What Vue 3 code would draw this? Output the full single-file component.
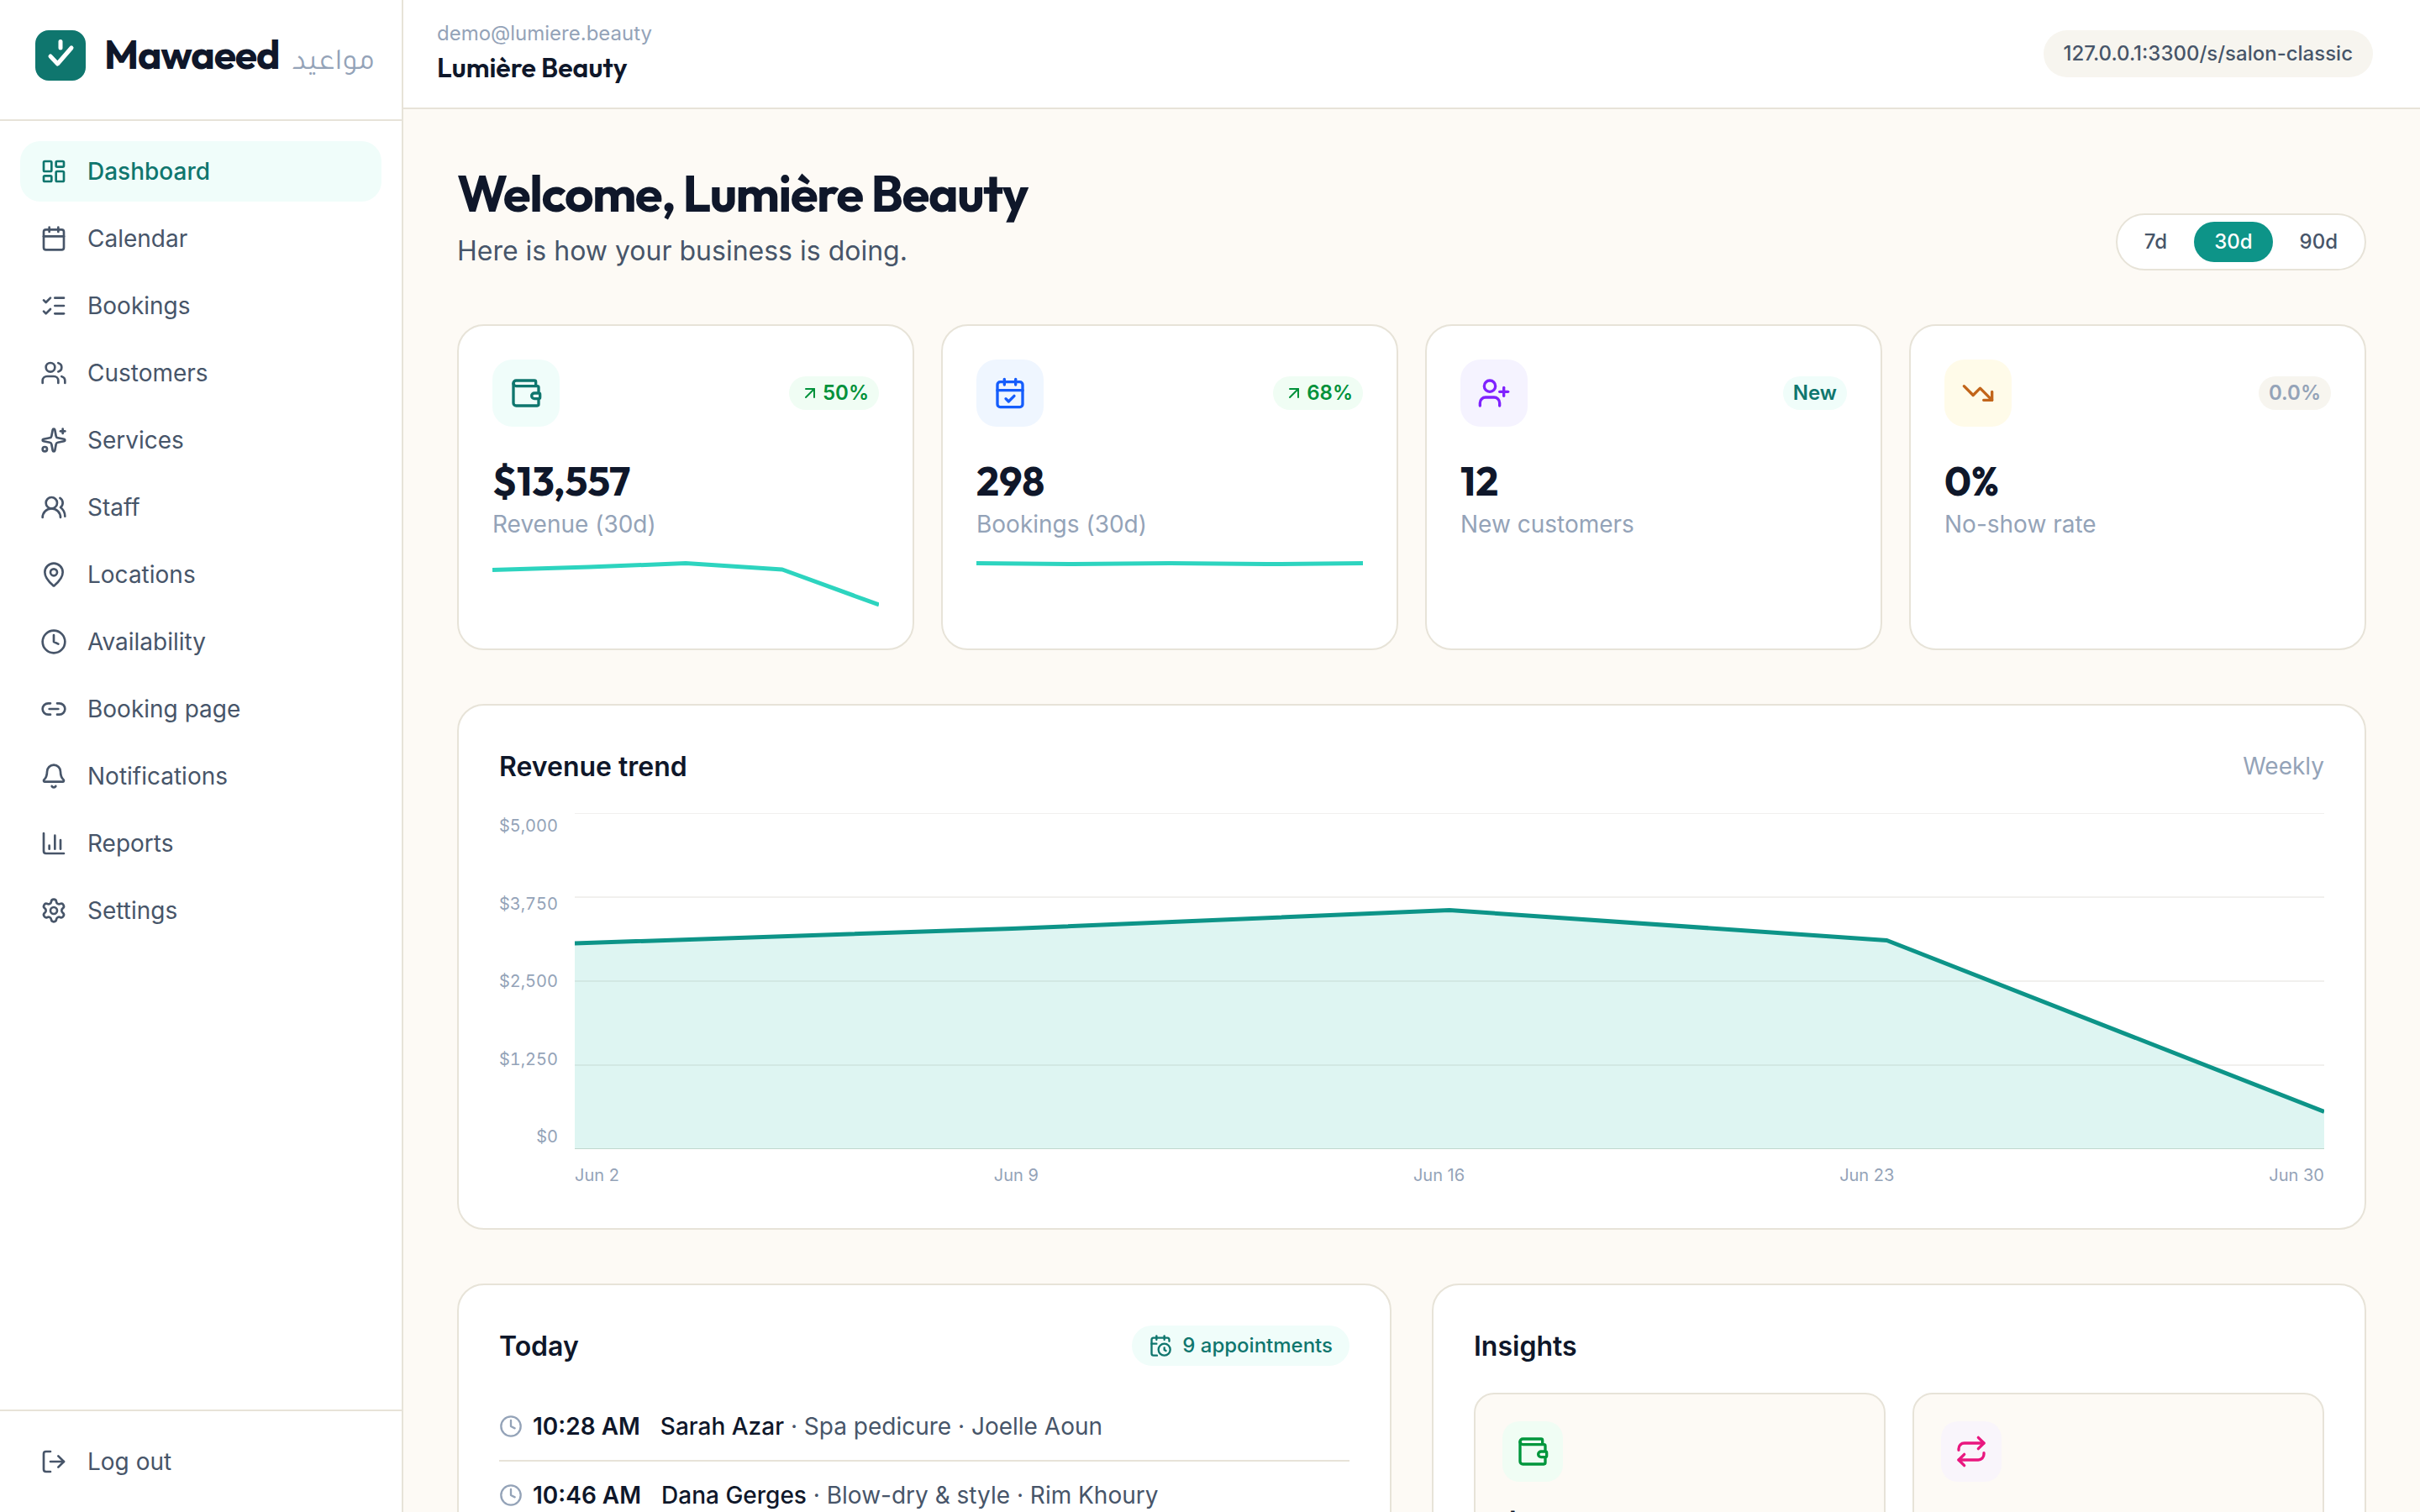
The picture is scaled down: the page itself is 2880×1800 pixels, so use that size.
<script setup>
const icons = {
  dashboard: '<rect width="7" height="9" x="3" y="3" rx="1"/><rect width="7" height="5" x="14" y="3" rx="1"/><rect width="7" height="9" x="14" y="12" rx="1"/><rect width="7" height="5" x="3" y="16" rx="1"/>',
  calendar: '<path d="M8 2v4"/><path d="M16 2v4"/><rect width="18" height="18" x="3" y="4" rx="2"/><path d="M3 10h18"/>',
  calendarCheck: '<path d="M8 2v4"/><path d="M16 2v4"/><rect width="18" height="18" x="3" y="4" rx="2"/><path d="M3 10h18"/><path d="m9 16 2 2 4-4"/>',
  calendarClock: '<path d="M16 14v2.2l1.6 1"/><path d="M16 2v4"/><path d="M21 7.5V6a2 2 0 0 0-2-2H5a2 2 0 0 0-2 2v14a2 2 0 0 0 2 2h3.5"/><path d="M3 10h5"/><path d="M8 2v4"/><circle cx="16" cy="16" r="6"/>',
  listChecks: '<path d="M13 5h8"/><path d="M13 12h8"/><path d="M13 19h8"/><path d="m3 17 2 2 4-4"/><path d="m3 7 2 2 4-4"/>',
  users: '<path d="M16 21v-2a4 4 0 0 0-4-4H6a4 4 0 0 0-4 4v2"/><path d="M16 3.128a4 4 0 0 1 0 7.744"/><path d="M22 21v-2a4 4 0 0 0-3-3.87"/><circle cx="9" cy="7" r="4"/>',
  sparkles: '<path d="M11.017 2.814a1 1 0 0 1 1.966 0l1.051 5.558a2 2 0 0 0 1.594 1.594l5.558 1.051a1 1 0 0 1 0 1.966l-5.558 1.051a2 2 0 0 0-1.594 1.594l-1.051 5.558a1 1 0 0 1-1.966 0l-1.051-5.558a2 2 0 0 0-1.594-1.594l-5.558-1.051a1 1 0 0 1 0-1.966l5.558-1.051a2 2 0 0 0 1.594-1.594z"/><path d="M20 2v4"/><path d="M22 4h-4"/><circle cx="4" cy="20" r="2"/>',
  usersRound: '<path d="M18 21a8 8 0 0 0-16 0"/><circle cx="10" cy="8" r="5"/><path d="M22 20c0-3.37-2-6.5-4-8a5 5 0 0 0-.45-8.3"/>',
  mapPin: '<path d="M20 10c0 4.993-5.539 10.193-7.399 11.799a1 1 0 0 1-1.202 0C9.539 20.193 4 14.993 4 10a8 8 0 0 1 16 0"/><circle cx="12" cy="10" r="3"/>',
  clock: '<circle cx="12" cy="12" r="10"/><path d="M12 6v6l4 2"/>',
  link: '<path d="M9 17H7A5 5 0 0 1 7 7h2"/><path d="M15 7h2a5 5 0 1 1 0 10h-2"/><path d="M8 12h8"/>',
  bell: '<path d="M10.268 21a2 2 0 0 0 3.464 0"/><path d="M3.262 15.326A1 1 0 0 0 4 17h16a1 1 0 0 0 .74-1.673C19.41 13.956 18 12.499 18 8A6 6 0 0 0 6 8c0 4.499-1.411 5.956-2.738 7.326"/>',
  chart: '<path d="M3 3v16a2 2 0 0 0 2 2h16"/><path d="M18 17V9"/><path d="M13 17V5"/><path d="M8 17v-3"/>',
  settings: '<path d="M9.671 4.136a2.34 2.34 0 0 1 4.659 0 2.34 2.34 0 0 0 3.319 1.915 2.34 2.34 0 0 1 2.33 4.033 2.34 2.34 0 0 0 0 3.831 2.34 2.34 0 0 1-2.33 4.033 2.34 2.34 0 0 0-3.319 1.915 2.34 2.34 0 0 1-4.659 0 2.34 2.34 0 0 0-3.32-1.915 2.34 2.34 0 0 1-2.33-4.033 2.34 2.34 0 0 0 0-3.831A2.34 2.34 0 0 1 6.35 6.051a2.34 2.34 0 0 0 3.319-1.915"/><circle cx="12" cy="12" r="3"/>',
  logout: '<path d="m16 17 5-5-5-5"/><path d="M21 12H9"/><path d="M9 21H5a2 2 0 0 1-2-2V5a2 2 0 0 1 2-2h4"/>',
  wallet: '<path d="M19 7V4a1 1 0 0 0-1-1H5a2 2 0 0 0 0 4h15a1 1 0 0 1 1 1v4h-3a2 2 0 0 0 0 4h3a1 1 0 0 0 1-1v-2a1 1 0 0 0-1-1"/><path d="M3 5v14a2 2 0 0 0 2 2h15a1 1 0 0 0 1-1v-4"/>',
  userPlus: '<path d="M16 21v-2a4 4 0 0 0-4-4H6a4 4 0 0 0-4 4v2"/><circle cx="9" cy="7" r="4"/><path d="M19 8v6"/><path d="M22 11h-6"/>',
  trendingDown: '<path d="M16 17h6v-6"/><path d="m22 17-8.5-8.5-5 5L2 7"/>',
  arrowUpRight: '<path d="M7 7h10v10"/><path d="M7 17 17 7"/>',
  repeat: '<path d="m17 2 4 4-4 4"/><path d="M3 11v-1a4 4 0 0 1 4-4h14"/><path d="m7 22-4-4 4-4"/><path d="M21 13v1a4 4 0 0 1-4 4H3"/>'
}

const nav = [
  { label: 'Dashboard', icon: 'dashboard', active: true },
  { label: 'Calendar', icon: 'calendar' },
  { label: 'Bookings', icon: 'listChecks' },
  { label: 'Customers', icon: 'users' },
  { label: 'Services', icon: 'sparkles' },
  { label: 'Staff', icon: 'usersRound' },
  { label: 'Locations', icon: 'mapPin' },
  { label: 'Availability', icon: 'clock' },
  { label: 'Booking page', icon: 'link' },
  { label: 'Notifications', icon: 'bell' },
  { label: 'Reports', icon: 'chart' },
  { label: 'Settings', icon: 'settings' }
]

const ranges = ['7d', '30d', '90d']

const stats = [
  { value: '$13,557', label: 'Revenue (30d)', icon: 'wallet', tone: 'teal', badge: '50%', badgeTone: 'up', line: '0,10.6 115,7 230,2.6 345,10 460,52' },
  { value: '298', label: 'Bookings (30d)', icon: 'calendarCheck', tone: 'blue', badge: '68%', badgeTone: 'up', line: '0,2.5 115,3.6 230,2.5 345,3.6 460,2.5' },
  { value: '12', label: 'New customers', icon: 'userPlus', tone: 'violet', badge: 'New', badgeTone: 'fresh' },
  { value: '0%', label: 'No-show rate', icon: 'trendingDown', tone: 'amber', badge: '0.0%', badgeTone: 'flat' }
]

const yLabels = ['$5,000', '$3,750', '$2,500', '$1,250', '$0']
const xLabels = ['Jun 2', 'Jun 9', 'Jun 16', 'Jun 23', 'Jun 30']
const gridLines = [0, 100, 200, 300, 400]
const trend = '0,155 520.5,137.5 1041,115.5 1561.5,151.5 2082,355.5'

const appointments = [
  { time: '10:28 AM', name: 'Sarah Azar', rest: 'Spa pedicure · Joelle Aoun' },
  { time: '10:46 AM', name: 'Dana Gerges', rest: 'Blow-dry & style · Rim Khoury' }
]
</script>

<template>
  <div class="app">
    <aside class="sidebar">
      <div class="brand">
        <svg class="logo" viewBox="0 0 60 60">
          <rect width="60" height="60" rx="16" fill="#0f766e" />
          <path d="M18 31l8.500 9L43 21" fill="none" stroke="#fff" stroke-width="5" stroke-linecap="round" stroke-linejoin="round" />
          <path d="M30 13.500v7.500" stroke="#fff" stroke-width="5" stroke-linecap="round" />
        </svg>
        <div class="brand-text">
          <span class="wordmark">Mawaeed</span>
          <span class="arabic" lang="ar">مواعيد</span>
        </div>
      </div>
      <nav class="nav">
        <a v-for="n in nav" :key="n.label" class="nav-item" :class="{ active: n.active }">
          <svg class="icon" viewBox="0 0 24 24" v-html="icons[n.icon]" />
          <span>{{ n.label }}</span>
        </a>
      </nav>
      <div class="logout">
        <a class="nav-item">
          <svg class="icon" viewBox="0 0 24 24" v-html="icons.logout" />
          <span>Log out</span>
        </a>
      </div>
    </aside>

    <div class="content">
      <header class="topbar">
        <div>
          <div class="email">demo@lumiere.beauty</div>
          <div class="business">Lumière Beauty</div>
        </div>
        <div class="url">127.0.0.1:3300/s/salon-classic</div>
      </header>

      <main class="main">
        <div class="intro">
          <div>
            <h1>Welcome, Lumière Beauty</h1>
            <p>Here is how your business is doing.</p>
          </div>
          <div class="ranges">
            <button v-for="r in ranges" :key="r" :class="{ on: r === '30d' }">{{ r }}</button>
          </div>
        </div>

        <section class="stats">
          <article v-for="s in stats" :key="s.label" class="card stat">
            <div class="stat-top">
              <div class="tile" :class="s.tone">
                <svg class="icon" viewBox="0 0 24 24" v-html="icons[s.icon]" />
              </div>
              <span class="badge" :class="s.badgeTone">
                <svg v-if="s.badgeTone === 'up'" class="icon" viewBox="0 0 24 24" v-html="icons.arrowUpRight" />
                <span>{{ s.badge }}</span>
              </span>
            </div>
            <div class="value">{{ s.value }}</div>
            <div class="label">{{ s.label }}</div>
            <svg v-if="s.line" class="spark" viewBox="0 0 460 64">
              <polyline :points="s.line" />
            </svg>
          </article>
        </section>

        <section class="card panel">
          <div class="panel-head">
            <h2>Revenue trend</h2>
            <span class="muted">Weekly</span>
          </div>
          <div class="chart">
            <div class="y-axis">
              <span v-for="y in yLabels" :key="y">{{ y }}</span>
            </div>
            <div class="plot">
              <svg viewBox="0 0 2082 400">
                <line v-for="g in gridLines" :key="g" x1="0" x2="2082" :y1="g" :y2="g" class="grid" :class="{ base: g === 400 }" />
                <polygon :points="`0,400 ${trend} 2082,400`" class="area" />
                <polyline :points="trend" class="trend" />
              </svg>
              <div class="x-axis">
                <span v-for="x in xLabels" :key="x">{{ x }}</span>
              </div>
            </div>
          </div>
        </section>

        <div class="columns">
          <section class="card panel">
            <div class="panel-head">
              <h2>Today</h2>
              <span class="count">
                <svg class="icon" viewBox="0 0 24 24" v-html="icons.calendarClock" />
                <span>9 appointments</span>
              </span>
            </div>
            <ul class="list">
              <li v-for="a in appointments" :key="a.time">
                <svg class="icon" viewBox="0 0 24 24" v-html="icons.clock" />
                <span class="time">{{ a.time }}</span>
                <span class="who"><b>{{ a.name }}</b> · {{ a.rest }}</span>
              </li>
            </ul>
          </section>

          <section class="card panel">
            <div class="panel-head">
              <h2>Insights</h2>
            </div>
            <div class="insights">
              <div class="insight">
                <div class="tile green">
                  <svg class="icon" viewBox="0 0 24 24" v-html="icons.wallet" />
                </div>
                <div class="insight-value">$45</div>
              </div>
              <div class="insight">
                <div class="tile pink">
                  <svg class="icon" viewBox="0 0 24 24" v-html="icons.repeat" />
                </div>
              </div>
            </div>
          </section>
        </div>
      </main>
    </div>
  </div>
</template>

<style>
body {
  overflow: hidden;
}
</style>

<style scoped>
* {
  box-sizing: border-box;
}
.app {
  display: flex;
  width: 2880px;
  height: 1800px;
  overflow: hidden;
  background: #fdfaf5;
  color: #0f172a;
  font-family: Inter, "Liberation Sans", sans-serif;
  font-size: 28px;
  line-height: 40px;
}
.icon {
  flex: none;
  display: block;
  fill: none;
  stroke: currentColor;
  stroke-width: 2;
  stroke-linecap: round;
  stroke-linejoin: round;
}
.sidebar {
  display: flex;
  flex-direction: column;
  flex: none;
  width: 480px;
  background: #fff;
  border-right: 2px solid #e7e3d8;
}
.brand {
  display: flex;
  align-items: flex-start;
  height: 144px;
  padding: 36px 0 0 42px;
  border-bottom: 2px solid #e7e3d8;
  white-space: nowrap;
}
.logo {
  width: 60px;
  height: 60px;
  flex: none;
}
.brand-text {
  display: flex;
  align-items: baseline;
  margin-left: 22px;
}
.wordmark {
  width: 224px;
  font-family: Outfit, Lato, sans-serif;
  font-weight: 700;
  font-size: 48px;
  line-height: 56px;
  letter-spacing: -1.2px;
}
.arabic {
  color: #94a3b8;
  font-family: Tajawal, "DejaVu Sans", sans-serif;
  font-weight: 400;
  font-size: 36px;
}
.nav {
  flex: 1;
  display: flex;
  flex-direction: column;
  gap: 8px;
  padding: 24px;
}
.nav-item {
  display: flex;
  align-items: center;
  gap: 24px;
  height: 72px;
  padding: 0 24px;
  border-radius: 24px;
  color: #475569;
}
.nav-item .icon {
  width: 32px;
  height: 32px;
}
.nav-item.active {
  background: #f0fdfa;
  color: #0f766e;
  font-weight: 500;
}
.logout {
  padding: 24px;
  border-top: 2px solid #e7e3d8;
}
.content {
  flex: 1;
  min-width: 0;
}
.topbar {
  display: flex;
  align-items: center;
  justify-content: space-between;
  height: 130px;
  padding: 0 56px 0 40px;
  background: #fff;
  border-bottom: 2px solid #e7e3d8;
}
.email {
  font-size: 24px;
  line-height: 32px;
  color: #94a3b8;
}
.business {
  font-family: Outfit, Lato, sans-serif;
  font-weight: 600;
  font-size: 32px;
  line-height: 48px;
}
.url {
  padding: 12px 24px;
  border-radius: 28px;
  background: #f7f5ef;
  color: #475569;
  font-size: 24px;
  font-weight: 500;
  line-height: 32px;
}
.main {
  padding: 64px;
}
.intro {
  display: flex;
  justify-content: space-between;
  align-items: flex-end;
}
h1,
h2,
p,
ul {
  margin: 0;
  padding: 0;
}
h1 {
  font-family: Outfit, Lato, sans-serif;
  font-weight: 700;
  font-size: 60px;
  line-height: 72px;
  letter-spacing: -1.5px;
}
.intro p {
  margin-top: 10px;
  font-size: 32px;
  line-height: 46px;
  color: #475569;
}
.ranges {
  display: flex;
  gap: 8px;
  padding: 8px;
  border: 2px solid #e7e3d8;
  border-radius: 34px;
  background: #fff;
}
.ranges button {
  border: 0;
  padding: 8px 24px;
  border-radius: 24px;
  background: none;
  color: #475569;
  font: 500 24px/32px Inter, sans-serif;
}
.ranges .on {
  background: #0d9488;
  color: #fff;
}
.card {
  background: #fff;
  border: 2px solid #e7e3d8;
  border-radius: 32px;
}
.stats {
  display: grid;
  grid-template-columns: repeat(4, 1fr);
  gap: 32px;
  margin-top: 64px;
}
.stat {
  height: 388px;
  padding: 40px;
}
.stat-top {
  display: flex;
  align-items: center;
  justify-content: space-between;
}
.tile {
  display: flex;
  align-items: center;
  justify-content: center;
  width: 80px;
  height: 80px;
  border-radius: 24px;
}
.tile .icon {
  width: 40px;
  height: 40px;
}
.teal { background: #f0fdfa; color: #0f766e; }
.blue { background: #eff6ff; color: #155dfc; }
.violet { background: #f5f3ff; color: #7f22fe; }
.amber { background: #fffbe9; color: #c2651a; }
.green { background: #f0fdf4; color: #00963c; }
.pink { background: #f9f5fb; color: #e9177f; }
.badge {
  display: flex;
  align-items: center;
  gap: 4px;
  padding: 4px 12px;
  border-radius: 20px;
  font-size: 24px;
  font-weight: 600;
  line-height: 32px;
}
.badge .icon {
  width: 24px;
  height: 24px;
  margin: 0 -1px 0 1px;
}
.up { background: #f0fdf4; color: #00913a; }
.fresh { background: #f0fdfa; color: #0f766e; }
.flat { background: #f7f5ef; color: #94a3b8; }
.value {
  margin-top: 32px;
  font-family: Outfit, Lato, sans-serif;
  font-weight: 700;
  font-size: 48px;
  line-height: 64px;
}
.label {
  color: #94a3b8;
}
.spark {
  display: block;
  width: 460px;
  height: 64px;
  margin-top: 24px;
}
.spark polyline {
  fill: none;
  stroke: #2dd4bf;
  stroke-width: 5;
  stroke-linejoin: round;
}
.panel {
  padding: 48px;
}
.stats + .panel {
  margin-top: 64px;
}
.panel-head {
  display: flex;
  align-items: center;
  justify-content: space-between;
  height: 48px;
}
h2 {
  padding-top: 2px;
  font-size: 32px;
  line-height: 48px;
  font-weight: 600;
}
.muted {
  color: #94a3b8;
}
.chart {
  display: flex;
  margin-top: 32px;
  color: #94a3b8;
  font-size: 20px;
  line-height: 30px;
}
.y-axis {
  display: flex;
  flex-direction: column;
  justify-content: space-between;
  align-items: flex-end;
  width: 70px;
  height: 400px;
  margin-right: 20px;
  font-variant-numeric: tabular-nums;
}
.plot {
  flex: 1;
}
.plot svg {
  display: block;
  width: 2082px;
  height: 400px;
}
.grid {
  stroke: #f1f0ee;
  stroke-width: 2;
}
.grid.base {
  stroke: #dcdcd6;
}
.area {
  fill: #14b8a6;
  fill-opacity: 0.14;
}
.trend {
  fill: none;
  stroke: #0d9488;
  stroke-width: 5;
  stroke-linejoin: round;
}
.x-axis {
  display: flex;
  justify-content: space-between;
  margin-top: 16px;
}
.columns {
  display: grid;
  grid-template-columns: 1fr 1fr;
  gap: 48px;
  margin-top: 64px;
}
.columns .panel {
  height: 700px;
}
.count {
  display: flex;
  align-items: center;
  gap: 12px;
  height: 48px;
  padding: 0 20px;
  border-radius: 24px;
  background: #f0fdfa;
  color: #0f766e;
  font-size: 24px;
  font-weight: 500;
}
.count .icon,
.list .icon {
  width: 28px;
  height: 28px;
}
.list {
  margin-top: 32px;
  list-style: none;
}
.list li {
  display: flex;
  align-items: center;
  padding: 20px 0;
}
.list li + li {
  border-top: 2px solid #e7e3d8;
}
.list .icon {
  color: #94a3b8;
}
.time {
  margin: 0 24px 0 12px;
  font-weight: 600;
}
.who {
  color: #475569;
}
.who b {
  color: #0f172a;
  font-weight: 500;
}
.insights {
  display: grid;
  grid-template-columns: 1fr 1fr;
  gap: 32px;
  margin-top: 32px;
}
.insight {
  height: 300px;
  padding: 32px;
  border: 2px solid #e7e3d8;
  border-radius: 24px;
  background: #fdfaf5;
}
.insight .tile {
  width: 72px;
  height: 72px;
  border-radius: 20px;
}
.insight-value {
  margin-top: 24px;
  font-family: Outfit, Lato, sans-serif;
  font-weight: 700;
  font-size: 40px;
  line-height: 56px;
}
</style>
